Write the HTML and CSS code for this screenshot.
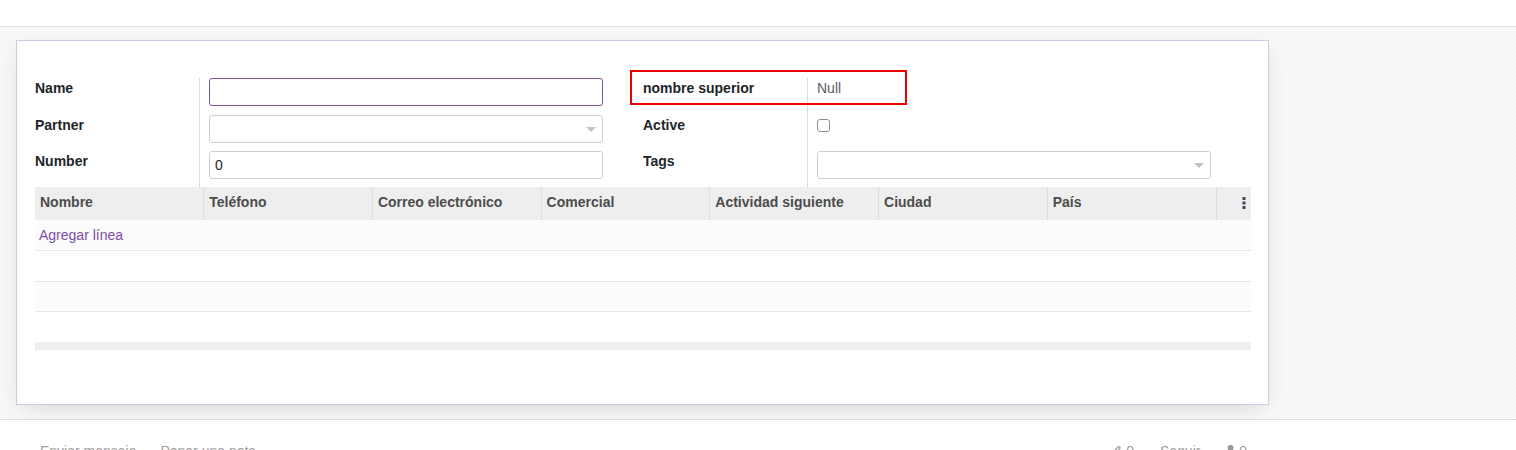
FILE: index.html
```html
<!DOCTYPE html>
<html lang="es">
<head>
    <meta charset="UTF-8">
    <title>Formulario</title>
    <link rel="stylesheet" href="styles.css">
</head>
<body>
    <div class="control"></div>

    <div class="form_bg">
        <div class="sheet">
            <div class="groups">
                <div class="group">
                    <div class="lbl">Name</div>
                    <div class="val"><div class="field focus"></div></div>
                    <div class="lbl">Partner</div>
                    <div class="val"><div class="field select"></div></div>
                    <div class="lbl">Number</div>
                    <div class="val"><div class="field">0</div></div>
                </div>
                <div class="group right">
                    <!-- recuadro rojo de la captura -->
                    <div class="mark"></div>
                    <div class="lbl">nombre superior</div>
                    <div class="val"><span class="text">Null</span></div>
                    <div class="lbl">Active</div>
                    <div class="val"><span class="check"></span></div>
                    <div class="lbl">Tags</div>
                    <div class="val"><div class="field select"></div></div>
                </div>
            </div>

            <table class="list">
                <thead>
                    <tr>
                        <th>Nombre</th>
                        <th>Teléfono</th>
                        <th>Correo electrónico</th>
                        <th>Comercial</th>
                        <th>Actividad siguiente</th>
                        <th>Ciudad</th>
                        <th>País</th>
                        <th class="opt">
                            <svg width="4" height="12" viewBox="0 0 4 12"><rect x="0.5" y="0" width="3" height="3"/><rect x="0.5" y="4.5" width="3" height="3"/><rect x="0.5" y="9" width="3" height="3"/></svg>
                        </th>
                    </tr>
                </thead>
                <tbody>
                    <tr class="odd"><td colspan="8"><a href="#">Agregar línea</a></td></tr>
                    <tr class="tall"><td colspan="8"></td></tr>
                    <tr class="odd"><td colspan="8"></td></tr>
                    <tr class="last"><td colspan="8"></td></tr>
                </tbody>
                <tfoot>
                    <tr><td colspan="8"></td></tr>
                </tfoot>
            </table>
        </div>
    </div>

    <div class="chatter">
        <div class="left">
            <span>Enviar mensaje</span>
            <span>Poner una nota</span>
        </div>
        <div class="right">
            <span class="ico">
                <svg width="10" height="12" viewBox="0 0 10 12" fill="none" stroke="#9a9a9a" stroke-width="1.3"><path d="M7.5 5.5 4.2 9.2a1.8 1.8 0 0 1-2.6-2.5L6 2a1.2 1.2 0 0 1 1.8 1.6L3.6 8.2"/></svg>
                0
            </span>
            <span>Seguir</span>
            <span class="ico">
                <svg width="9" height="12" viewBox="0 0 9 12" fill="#9a9a9a"><circle cx="4.5" cy="3" r="3"/><path d="M0 12c0-4 2-5.5 4.5-5.5S9 8 9 12z"/></svg>
                0
            </span>
        </div>
    </div>
</body>
</html>
```

FILE: styles.css
```css
*{
    margin: 0;
    padding: 0;
    box-sizing: border-box;
}
body{
    font-family: "Liberation Sans", Arial, sans-serif;
    font-size: 14px;
    color: #212529;
    background-color: #fff;
    overflow: hidden;
}

/* barra de arriba */
.control{
    height: 27px;
    border-bottom: 1px solid #e1e1e1;
}

/* fondo cuadriculado del formulario */
.form_bg{
    padding: 13px 0 14px 16px;
    border-bottom: 1px solid #dedede;
    background-color: #f8f8f8;
    background-image: repeating-conic-gradient(#f4f4f4 0 25%, #fbfbfb 0 50%);
    background-size: 4px 4px;
}
.sheet{
    width: 1253px;
    padding: 37px 17px 54px 18px;
    background-color: #fff;
    border: 1px solid #cfcbe0;
    box-shadow: 0 6px 22px -6px rgba(0,0,0,.16);
}

.groups{
    display: grid;
    grid-template-columns: 1fr 1fr;
}
.group{
    display: grid;
    grid-template-columns: 164px 1fr;
    grid-template-rows: 37px 36px 36px;
    position: relative;
}
.lbl{
    font-weight: bold;
    line-height: 20px;
}
.val{
    border-left: 1px solid #dcdcdc;
    padding: 0 40px 0 9px;
}
.field{
    height: 28px;
    border: 1px solid #cfcfcf;
    border-radius: 3px;
    padding: 0 5px;
    line-height: 26px;
    position: relative;
}
.field.focus{
    border-color: #7c56a6;
}
/* flechita del select */
.field.select::after{
    content: "";
    position: absolute;
    right: 6px;
    top: 11px;
    border-left: 5px solid transparent;
    border-right: 5px solid transparent;
    border-top: 5px solid #c2c2c2;
}
.text{
    display: block;
    line-height: 20px;
    color: #5a5a6a;
}
.check{
    display: block;
    width: 13px;
    height: 13px;
    margin-top: 4px;
    border: 1px solid #8f8f8f;
    border-radius: 3px;
}
.mark{
    position: absolute;
    left: -13px;
    top: -8px;
    width: 277px;
    height: 35px;
    border: 2px solid #ee0000;
}

/* tabla */
.list{
    width: 100%;
    border-collapse: collapse;
    table-layout: fixed;
}
.list th{
    height: 33px;
    background-color: #eeeeee;
    color: #4c4c4c;
    font-weight: bold;
    text-align: left;
    padding: 0 5px 4px;
    border-left: 1px solid #dedede;
    white-space: nowrap;
}
.list th:first-child{
    border-left: none;
}
.list th.opt{
    width: 35px;
    text-align: right;
    padding-right: 5px;
}
.list th.opt svg{
    fill: #3e4a5a;
    vertical-align: middle;
}
.list td{
    height: 30px;
    padding: 0 4px;
    border-bottom: 1px solid #e5e5e5;
}
.list tr.tall td{
    height: 31px;
}
.list tr.odd td{
    background-color: #fbfbfb;
}
.list tr.last td{
    height: 31px;
    border-bottom: none;
}
.list tfoot td{
    height: 8px;
    padding: 0;
    background-color: #eeeeee;
    border: none;
}
.list a{
    color: #7d4fa3;
    text-decoration: none;
}

/* chatter */
.chatter{
    width: 1269px;
    display: flex;
    justify-content: space-between;
    padding: 21px 22px 0 40px;
    color: #a0a0a0;
    line-height: 20px;
}
.chatter .left span{
    margin-right: 20px;
}
.chatter .right span{
    margin-left: 22px;
}
.chatter .ico svg{
    vertical-align: -1px;
}
```
